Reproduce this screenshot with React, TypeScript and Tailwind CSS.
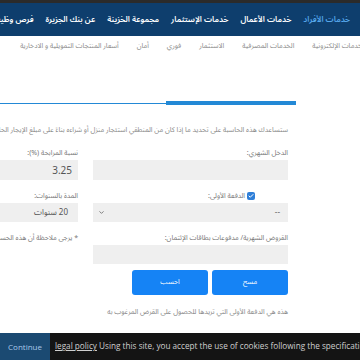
import { ChevronDown, Check } from 'lucide-react';

const AR = { fontFamily: '"Noto Sans Arabic", "Noto Kufi Arabic", "DejaVu Sans", sans-serif' };

const mainNav = ['خدمات الأفراد', 'خدمات الأعمال', 'خدمات الإستثمار', 'مجموعة الخزينة', 'عن بنك الجزيرة', 'فرص وظيفية'];
const subNav = ['الخدمات الإلكترونية', 'الخدمات المصرفية', 'الاستثمار', 'فوري', 'أمان', 'أسعار المنتجات التمويلية و الادخارية'];

function Field({ label, children }: { label: React.ReactNode; children: React.ReactNode }) {
  return (
    <div className="flex flex-col">
      <div className="h-[12px] text-[7px] text-[#777] leading-[12px] whitespace-nowrap">{label}</div>
      <div className="mt-[1px]">{children}</div>
    </div>
  );
}

export default function App() {
  return (
    <div dir="rtl" className="w-[360px] h-[360px] overflow-hidden bg-white flex flex-col" style={AR}>
      <div className="h-[3px] bg-[#2b2b2b]" />
      <nav className="h-[33px] shrink-0 bg-[#0e3e6d] flex items-center pr-[10px] gap-[12px] whitespace-nowrap overflow-hidden">
        {mainNav.map((n, i) => (
          <span key={n} className={`text-[8px] font-semibold ${i === 0 ? 'text-[#55a6ea]' : 'text-white'}`}>
            {n}
          </span>
        ))}
      </nav>
      <div className="h-[21px] shrink-0 flex items-center mr-[-6px] gap-[18px] whitespace-nowrap overflow-hidden">
        {subNav.map((n) => (
          <span key={n} className="text-[7px] text-[#8a8a8a]">{n}</span>
        ))}
      </div>

      <div className="mt-[44px] mr-[64px] flex items-center h-[4px] shrink-0">
        <div className="w-[130px] h-[4px] bg-[#2389d6]" />
        <div className="flex-1 h-px bg-[#2389d6]" />
      </div>

      <div className="mr-[72px] flex flex-col">
        <p className="mt-[20px] h-[10px] leading-[10px] text-[7px] text-[#888] whitespace-nowrap">
          ستساعدك هذه الحاسبة على تحديد ما إذا كان من المنطقي استئجار منزل أو شراءه بناءً على مبلغ الإيجار الحالي . . .
        </p>

        <div className="mt-[12px] grid grid-cols-[195px_195px] gap-x-[15px] gap-y-[10px]">
          <Field label="الدخل الشهري:">
            <div className="h-[20px] bg-[#efefef]" />
          </Field>
          <Field label="نسبة المرابحة (%):">
            <div className="h-[20px] bg-[#efefef] flex items-center pr-[6px] text-[10px] text-[#555]">
              3.25
            </div>
          </Field>

          <Field
            label={
              <span className="flex items-center gap-[2px] mr-[33px]">
                <span className="w-[8px] h-[8px] rounded-[2px] bg-[#2f7fd8] flex items-center justify-center">
                  <Check size={6} strokeWidth={4} color="white" />
                </span>
                الدفعة الأولى:
              </span>
            }
          >
            <div className="h-[19px] bg-[#efefef] flex items-center justify-between pr-[8px] pl-[5px] text-[8px] text-[#666]">
              <span>--</span>
              <ChevronDown size={7} strokeWidth={2.5} color="#555" />
            </div>
          </Field>
          <Field label="المدة بالسنوات:">
            <div className="h-[19px] bg-[#efefef] flex items-center pr-[10px] text-[8px] text-[#555]">
              20 سنوات
            </div>
          </Field>

          <Field label="القروض الشهرية/ مدفوعات بطاقات الإئتمان:">
            <div className="h-[19px] bg-[#efefef]" />
          </Field>
          <div className="text-[7px] text-[#777] leading-[12px] whitespace-nowrap">
            * يرجى ملاحظة أن هذه الحسبة تقديرية فقط
          </div>
        </div>

        <div className="mt-[6px] flex gap-[4px]">
          <button className="w-[76px] h-[25px] rounded-[3px] bg-[#1583f5] text-white text-[7px]">مسح</button>
          <button className="w-[76px] h-[25px] rounded-[3px] bg-[#1583f5] text-white text-[7px]">احسب</button>
        </div>

        <p className="mt-[12px] text-[7px] leading-[10px] text-[#888] whitespace-nowrap">
          هذه هي الدفعة الأولى التي تريدها للحصول على القرض المرغوب به
        </p>
      </div>

      <div className="mt-auto h-[27px] shrink-0 bg-[#141414] flex items-center whitespace-nowrap overflow-hidden" dir="ltr" style={{ fontFamily: '"Open Sans", sans-serif' }}>
        <span className="h-[27px] w-[50px] shrink-0 bg-[#1b4a72] text-[#a9c9ea] text-[8px] flex items-center justify-center">
          Continue
        </span>
        <span className="ml-[5px] text-[8.2px] text-[#cfcfcf]">
          <span className="underline">legal policy</span> Using this site, you accept the use of cookies following the specification
        </span>
      </div>
    </div>
  );
}
